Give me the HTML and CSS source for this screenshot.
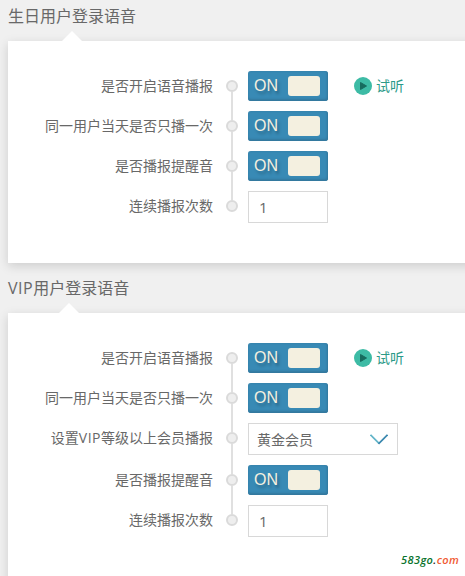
FILE: index.html
```html
<!DOCTYPE html>
<html lang="zh-CN">
<head>
<meta charset="utf-8">
<title>登录语音设置</title>
<link rel="stylesheet" href="styles.css">
</head>
<body>
<section>
  <h2 class="title">生日用户登录语音</h2>
  <div class="panel">
    <div class="row"><span class="label">是否开启语音播报</span><i class="dot"></i><span class="toggle"><span>ON</span><b class="knob"></b></span>
      <a class="listen"><svg width="18" height="18" viewBox="0 0 18 18"><circle cx="9" cy="9" r="9" fill="#3dbba5"/><path d="M6.500 5.500 12.500 9l-6 3.500z" fill="#176b5e" stroke="#176b5e" stroke-linejoin="round"/></svg><span>试听</span></a></div>
    <div class="row"><span class="label">同一用户当天是否只播一次</span><i class="dot"></i><span class="toggle"><span>ON</span><b class="knob"></b></span></div>
    <div class="row"><span class="label">是否播报提醒音</span><i class="dot"></i><span class="toggle"><span>ON</span><b class="knob"></b></span></div>
    <div class="row"><span class="label">连续播报次数</span><i class="dot"></i><span class="field number">1</span></div>
  </div>
</section>
<section>
  <h2 class="title"><span class="latin">VIP</span>用户登录语音</h2>
  <div class="panel panel-last">
    <div class="row"><span class="label">是否开启语音播报</span><i class="dot"></i><span class="toggle"><span>ON</span><b class="knob"></b></span>
      <a class="listen"><svg width="18" height="18" viewBox="0 0 18 18"><circle cx="9" cy="9" r="9" fill="#3dbba5"/><path d="M6.500 5.500 12.500 9l-6 3.500z" fill="#176b5e" stroke="#176b5e" stroke-linejoin="round"/></svg><span>试听</span></a></div>
    <div class="row"><span class="label">同一用户当天是否只播一次</span><i class="dot"></i><span class="toggle"><span>ON</span><b class="knob"></b></span></div>
    <div class="row"><span class="label">设置<span class="latin">VIP</span>等级以上会员播报</span><i class="dot"></i><span class="field select">黄金会员<svg width="18" height="11" viewBox="0 0 18 11" fill="none" stroke-width="1.700"><path d="M.5 .8 9 9.300" stroke="#62b4c8"/><path d="M8.500 9.800 17.500 .8" stroke="#3987ae"/></svg></span></div>
    <div class="row"><span class="label">是否播报提醒音</span><i class="dot"></i><span class="toggle"><span>ON</span><b class="knob"></b></span></div>
    <div class="row"><span class="label">连续播报次数</span><i class="dot"></i><span class="field number">1</span></div>
  </div>
</section>
<div class="brand"><span>583go</span><em>.</em><strong>com</strong></div>
</body>
</html>
```
FILE: styles.css
```css
* { box-sizing: border-box; }
html { height: 100%; overflow: hidden; }
body {
  margin: 0;
  padding-left: 8px;
  height: 576px;
  overflow: hidden;
  background: #f0f0f0;
  color: #686868;
  font: 400 14px/30px "Open Sans", "Noto Sans CJK SC", sans-serif;
}
.title {
  position: relative;
  display: block;
  width: max-content;
  margin: 0;
  padding-bottom: 8px;
  font-size: 16px;
  font-weight: 400;
  line-height: 33px;
}
section + section .title { padding-top: 9px; }
.title::after {
  content: "";
  position: absolute;
  left: calc(50% - 10px);
  bottom: 0;
  z-index: 1;
  border: 10px solid transparent;
  border-top: 0;
  border-bottom-color: #fff;
}
.latin { letter-spacing: .5px; }
.panel {
  display: flex;
  flex-direction: column;
  gap: 10px;
  height: 222px;
  padding-top: 30px;
  margin-right: -20px;
  background: #fff;
  box-shadow: 0 3px 10px rgba(0, 0, 0, .15);
}
.panel-last { height: 280px; }
.row { display: flex; align-items: flex-start; }
.label {
  width: 205px;
  line-height: 29px;
  text-align: right;
  white-space: nowrap;
}
.dot {
  position: relative;
  flex: none;
  width: 12px;
  height: 12px;
  margin: 9px 10px 0 13px;
  border: 2px solid #dadada;
  border-radius: 50%;
  background: #eee;
}
.row:not(:last-child) .dot::after {
  content: "";
  position: absolute;
  left: 3px;
  top: 10px;
  width: 2px;
  height: 28px;
  background: #e0e0e0;
}
.row:has(.select) .dot::after { height: 30px !important; }
.toggle {
  display: flex;
  align-items: center;
  justify-content: space-between;
  width: 80px;
  height: 30px;
  padding: 0 8px 0 6px;
  border-radius: 3px;
  background: #388ab5;
  box-shadow: inset 0 -2px 2px #34799f, inset -1px 0 2px #34799f;
  color: #f4f0e0;
  font: 16px/30px "Liberation Sans", sans-serif;
  text-shadow: 2px 3px 3px rgba(0, 0, 0, .25);
}
.knob {
  width: 32px;
  height: 20px;
  border-radius: 3px;
  background: #f4f0e0;
}
.listen {
  display: flex;
  align-items: center;
  gap: 4px;
  height: 30px;
  margin-left: 26px;
  color: #2b9a88;
}
.listen span { line-height: 30px; }
.field {
  display: flex;
  align-items: center;
  width: 80px;
  height: 32px;
  padding-left: 10px;
  border: 1px solid #d8d8d8;
  background: #fff;
}
.number { font-size: 15px; }
.select {
  justify-content: space-between;
  width: 150px;
  padding: 1px 9px 0 8px;
}
.brand {
  position: absolute;
  left: 401px;
  top: 552px;
  font: italic 600 11px/16px "Open Sans", sans-serif;
  letter-spacing: .4px;
  color: #08732c;
}
.brand em { color: #222; }
.brand strong { font-weight: 600; color: #f05a32; }
```
